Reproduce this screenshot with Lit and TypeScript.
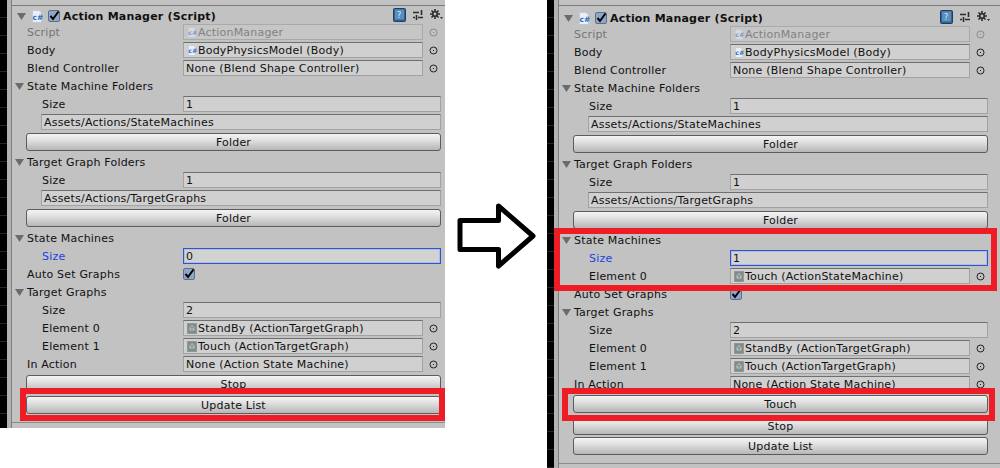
import { html, css, svg, LitElement, nothing } from 'lit'
import { customElement, property } from 'lit/decorators.js'

type Row =
  | { kind: 'field'; label: string; value: string; icon?: 'cs' | 'asset'; indent?: boolean; ring?: boolean; disabled?: boolean; focus?: boolean }
  | { kind: 'section'; label: string }
  | { kind: 'path'; value: string }
  | { kind: 'check'; label: string }
  | { kind: 'button'; label: string; size?: 'short' | 'mid' }

const top: Row[] = [
  { kind: 'field', label: 'Script', value: 'ActionManager', icon: 'cs', ring: true, disabled: true },
  { kind: 'field', label: 'Body', value: 'BodyPhysicsModel (Body)', icon: 'cs', ring: true },
  { kind: 'field', label: 'Blend Controller', value: 'None (Blend Shape Controller)', ring: true },
  { kind: 'section', label: 'State Machine Folders' },
  { kind: 'field', label: 'Size', value: '1', indent: true },
  { kind: 'path', value: 'Assets/Actions/StateMachines' },
  { kind: 'button', label: 'Folder' },
  { kind: 'section', label: 'Target Graph Folders' },
  { kind: 'field', label: 'Size', value: '1', indent: true },
  { kind: 'path', value: 'Assets/Actions/TargetGraphs' },
  { kind: 'button', label: 'Folder' },
  { kind: 'section', label: 'State Machines' },
]

const graphs: Row[] = [
  { kind: 'check', label: 'Auto Set Graphs' },
  { kind: 'section', label: 'Target Graphs' },
  { kind: 'field', label: 'Size', value: '2', indent: true },
  { kind: 'field', label: 'Element 0', value: 'StandBy (ActionTargetGraph)', icon: 'asset', indent: true, ring: true },
  { kind: 'field', label: 'Element 1', value: 'Touch (ActionTargetGraph)', icon: 'asset', indent: true, ring: true },
  { kind: 'field', label: 'In Action', value: 'None (Action State Machine)', ring: true },
]

const before: Row[] = [
  ...top,
  { kind: 'field', label: 'Size', value: '0', indent: true, focus: true },
  ...graphs,
  { kind: 'button', label: 'Stop', size: 'mid' },
  { kind: 'button', label: 'Update List' },
]

const after: Row[] = [
  ...top,
  { kind: 'field', label: 'Size', value: '1', indent: true, focus: true },
  { kind: 'field', label: 'Element 0', value: 'Touch (ActionStateMachine)', icon: 'asset', indent: true, ring: true },
  ...graphs,
  { kind: 'button', label: 'Touch' },
  { kind: 'button', label: 'Stop', size: 'short' },
  { kind: 'button', label: 'Update List' },
]

const triangle = html`<svg class="tri" width="9" height="7" viewBox="0 0 9 7"><path d="M0 0H9L4.5 7Z" fill="#6b6b6b" /></svg>`

const ring = html`<svg class="ring" width="9" height="9" viewBox="0 0 9 9">
  <circle cx="4.5" cy="4.5" r="3.5" fill="none" stroke="currentColor" /><rect x="4" y="4" width="1" height="1" fill="currentColor" />
</svg>`

const csGlyph = svg`
  <path d="M1.5 .5H8L10.5 3V12.5H1.5Z" fill="#e9eff7" stroke="#c3c9d0" />
  <text x="1.6" y="10" font-size="7.5" font-weight="700" letter-spacing="0" font-family="'DejaVu Sans', sans-serif" fill="#2c6cc4">c#</text>`

const csIcon = html`<svg class="obj" width="10" height="11" viewBox="0 0 12 13">${csGlyph}</svg>`

const assetIcon = html`<svg class="obj" width="10" height="11" viewBox="0 0 12 13">
  <path d="M.5 .5H11.5V12.5H.5Z" fill="#7f8c8c" stroke="#8a9292" />
  <path d="M3 4L6 2.5 9 4V8.5L6 10 3 8.5Z" fill="#b4bebe" />
  <path d="M3 4L6 5.5 9 4M6 5.5V10" fill="none" stroke="#6f7878" />
</svg>`

@customElement('inspector-panel')
export class InspectorPanel extends LitElement {
  static styles = css`
    :host {
      display: flex;
      position: relative;
      flex: none;
      overflow: hidden;
      background: #c2c2c2;
      font-family: 'DejaVu Sans', sans-serif;
      font-size: 11px;
      letter-spacing: 0.2px;
      color: #111;
    }
    .strip {
      flex: none;
      width: 12px;
      box-sizing: border-box;
      border-right: 1px solid #7e7e7e;
      background: #b2b2b2;
    }
    .strip-lines {
      width: 7px;
      height: 100%;
      background: repeating-linear-gradient(to bottom, #000 0 17px, #262626 17px 18px);
    }
    .body {
      flex: 1;
      min-width: 0;
      padding: 5px var(--pad-right) 0 0;
    }
    .header {
      display: flex;
      align-items: center;
      height: var(--head-height);
      box-sizing: border-box;
      margin-right: calc(var(--pad-right) * -1);
      padding: var(--head-pad) 0 0 5px;
      border-top: 1px solid #7a7a7a;
      font-weight: 700;
    }
    .check {
      display: block;
      flex: none;
    }
    .header .script {
      margin-left: 5px;
    }
    .header .check {
      margin: 0 3px 0 5px;
    }
    .title {
      flex: 1;
    }
    .tools {
      display: flex;
      align-items: center;
      gap: 7px;
      width: 50px;
      margin: -3px calc(var(--pad-right) - 2px) 0 0;
    }
    .row {
      display: flex;
      align-items: center;
      height: 18px;
      padding-left: 15px;
      white-space: nowrap;
    }
    .label {
      flex: none;
      width: 156px;
    }
    .indent .label {
      width: 141px;
      padding-left: 15px;
    }
    .section {
      padding-left: 3px;
    }
    .section .tri {
      margin-right: 3px;
    }
    .value {
      flex: 1;
      display: flex;
      align-items: center;
      gap: 1px;
      min-width: 0;
      height: 16px;
      box-sizing: border-box;
      padding-left: 2px;
      background: #d0d0d0;
      border: 1px solid #a2a2a2;
      border-top-color: #6f6f6f;
      overflow: hidden;
    }
    .obj {
      flex: none;
      margin-left: 1px;
    }
    .ring-slot {
      flex: none;
      width: 18px;
      display: flex;
      justify-content: flex-end;
      padding-right: 3px;
      box-sizing: border-box;
      color: #222;
    }
    .disabled .label {
      color: #757575;
    }
    .disabled .value {
      color: #828282;
      background: #c6c6c6;
      border-color: #aaa;
    }
    .disabled .ring-slot {
      color: #8a8a8a;
    }
    .disabled .obj {
      opacity: 0.5;
    }
    .focus .label {
      color: #1a44e0;
    }
    .focus .value {
      border: 1px solid #2b54d8;
      box-shadow: inset 0 0 0 1px rgba(43, 84, 216, 0.18);
      background: #d2d2d2;
    }
    .path {
      padding-left: 29px;
    }
    .button-row {
      display: flex;
      height: 22px;
      box-sizing: border-box;
      padding: 2px 0 0 14px;
    }
    .button-row.short {
      height: 20px;
    }
    .button-row.mid {
      height: 21px;
    }
    button {
      flex: 1;
      height: 18px;
      padding: 0;
      font: inherit;
      letter-spacing: inherit;
      color: #111;
      border: 1px solid #5c5c5c;
      border-radius: 3px;
      background: linear-gradient(to bottom, #f4f4f4, #e2e2e2 35%, #b6b6b6);
    }
    .foot {
      height: 1px;
      margin: 6px calc(var(--pad-right) * -1) 0 0;
      background: #8c8c8c;
    }
    .mark {
      position: absolute;
      box-sizing: border-box;
      border: 6px solid #ee1c25;
      pointer-events: none;
    }
    .box-update {
      left: 20px;
      top: 388px;
      width: 425px;
      height: 33px;
    }
    .box-state {
      left: 7px;
      top: 228px;
      width: 443px;
      height: 63px;
    }
    .box-touch {
      left: 15px;
      top: 388px;
      width: 433px;
      height: 33px;
    }
  `

  @property({ attribute: false })
  rows: Row[] = []

  @property({ attribute: false })
  marks: string[] = []

  private field(row: Extract<Row, { kind: 'field' }>) {
    const classes = ['row', row.indent ? 'indent' : '', row.disabled ? 'disabled' : '', row.focus ? 'focus' : ''].join(' ')
    return html`
      <div class=${classes}>
        <span class="label">${row.label}</span>
        <span class="value">${row.icon === 'cs' ? csIcon : row.icon === 'asset' ? assetIcon : nothing}${row.value}</span>
        ${row.ring ? html`<span class="ring-slot">${ring}</span>` : nothing}
      </div>
    `
  }

  private renderRow(row: Row) {
    switch (row.kind) {
      case 'field':
        return this.field(row)
      case 'section':
        return html`<div class="row section">${triangle}<span>${row.label}</span></div>`
      case 'path':
        return html`<div class="row path"><span class="value">${row.value}</span></div>`
      case 'check':
        return html`<div class="row"><span class="label">${row.label}</span>${this.checkbox()}</div>`
      case 'button':
        return html`<div class="button-row ${row.size ?? ''}"><button>${row.label}</button></div>`
    }
  }

  private checkbox() {
    return html`<svg class="check" width="12" height="12" viewBox="0 0 12 12">
      <rect x=".5" y=".5" width="11" height="11" rx="1.5" fill="#8fa6c8" stroke="#5e6f88" />
      <path d="M2.5 6L5 9 10.5 1.5" fill="none" stroke="#000" stroke-width="2" />
    </svg>`
  }

  render() {
    return html`
      <div class="strip"><div class="strip-lines"></div></div>
      <div class="body">
        <div class="header">
          ${triangle}
          <svg class="script" width="12" height="13" viewBox="0 0 12 13">${csGlyph}</svg>
          ${this.checkbox()}
          <span class="title">Action Manager (Script)</span>
          <span class="tools">
            <svg width="13" height="14" viewBox="0 0 13 14">
              <rect x=".5" y=".5" width="12" height="13" rx="1" fill="#2f6390" stroke="#1e3f5e" />
              <rect x="2" y="1.5" width="9" height="10" fill="#5a8fbd" />
              <text x="4" y="10" font-size="8" font-weight="400" font-family="'DejaVu Sans', sans-serif" fill="#dce8f2">?</text>
            </svg>
            <svg width="10" height="10" viewBox="0 0 10 10">
              <path d="M0 2.5H6M0 7.5H2M5 7.5H10M8.5 0V5M3.5 5V10" stroke="#2c2c2c" stroke-width="1.6" fill="none" />
            </svg>
            <svg width="13" height="11" viewBox="0 0 13 11">
              <path d="M5 0V10M0 5H10M1.5 1.5L8.5 8.5M8.5 1.5L1.5 8.5" stroke="#2c2c2c" stroke-width="1.6" />
              <circle cx="5" cy="5" r="3" fill="#2c2c2c" />
              <circle cx="5" cy="5" r="1.4" fill="#c2c2c2" />
              <path d="M10 8H13L11.5 10Z" fill="#2c2c2c" />
            </svg>
          </span>
        </div>
        ${this.rows.map((row) => this.renderRow(row))}
        <div class="foot"></div>
      </div>
      ${this.marks.map((mark) => html`<div class="mark ${mark}"></div>`)}
    `
  }
}

@customElement('app-root')
export class AppRoot extends LitElement {
  static styles = css`
    :host {
      display: flex;
      width: 1000px;
      height: 468px;
      overflow: hidden;
      background: #fff;
    }
    .gap {
      flex: none;
      width: 102px;
    }
    .arrow {
      display: block;
      margin: 200px 0 0 10px;
    }
    .before {
      width: 445px;
      height: 428px;
      --pad-right: 4px;
      --head-height: 18px;
      --head-pad: 3px;
    }
    .after {
      width: 453px;
      height: 468px;
      --pad-right: 12px;
      --head-height: 20px;
      --head-pad: 5px;
    }
  `

  render() {
    return html`
      <inspector-panel class="before" .rows=${before} .marks=${['box-update']}></inspector-panel>
      <div class="gap">
        <svg class="arrow" width="84" height="72" viewBox="0 0 84 72">
          <path d="M5 20.5H43.5V6L78 36 43.5 66V49.5H5Z" fill="#fff" stroke="#000" stroke-width="5" stroke-linejoin="round" />
        </svg>
      </div>
      <inspector-panel class="after" .rows=${after} .marks=${['box-state', 'box-touch']}></inspector-panel>
    `
  }
}
